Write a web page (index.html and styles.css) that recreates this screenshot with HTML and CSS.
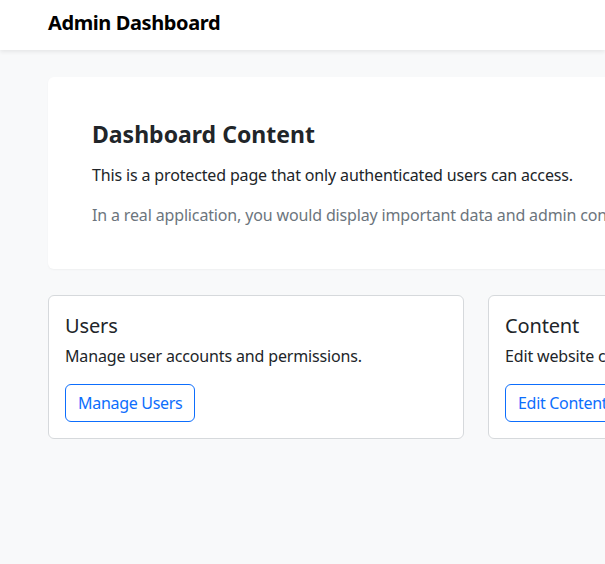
FILE: index.html
```html
<!DOCTYPE html>
<html lang="en">
<head>
<meta charset="utf-8">
<title>Admin Dashboard</title>
<link rel="stylesheet" href="styles.css">
</head>
<body>
<nav class="navbar">
  <span class="brand">Admin Dashboard</span>
</nav>
<main class="main">
  <section class="hero">
    <h2 class="hero-title">Dashboard Content</h2>
    <p class="hero-text">This is a protected page that only authenticated users can access.</p>
    <p class="hero-muted">In a real application, you would display important data and admin controls here.</p>
  </section>
  <div class="cards">
    <div class="card">
      <h5 class="card-title">Users</h5>
      <p class="card-text">Manage user accounts and permissions.</p>
      <a class="btn" href="#">Manage Users</a>
    </div>
    <div class="card">
      <h5 class="card-title">Content</h5>
      <p class="card-text">Edit website content and pages.</p>
      <a class="btn" href="#">Edit Content</a>
    </div>
    <div class="card">
      <h5 class="card-title">Settings</h5>
      <p class="card-text">Configure system settings.</p>
      <a class="btn" href="#">View Settings</a>
    </div>
  </div>
</main>
</body>
</html>
```
FILE: styles.css
```css
html, body {
  margin: 0;
  padding: 0;
  overflow: hidden;
}
body {
  background: #f8f9fa;
  color: #212529;
  font-family: "Noto Sans", "Noto Sans CJK KR", sans-serif;
  font-size: 16px;
  line-height: 1.5;
  letter-spacing: -0.15px;
  height: 564px;
}
.navbar {
  height: 50px;
  background: #fff;
  box-shadow: 0 2px 4px rgba(0, 0, 0, 0.075);
  display: flex;
  align-items: center;
  padding-left: 48px;
  position: relative;
}
.brand {
  font-size: 20px;
  font-weight: 700;
  color: #000;
  line-height: 30px;
  letter-spacing: -0.4px;
  margin-top: -5px;
}
.main {
  padding: 27px 0 0 48px;
  width: 1296px;
}
.hero {
  background: #fff;
  border-radius: 6px;
  box-shadow: 0 1px 2px rgba(0, 0, 0, 0.04);
  padding: 44px 44px 42px;
}
.hero-title {
  margin: 0 0 14px;
  font-size: 23px;
  font-weight: 700;
  line-height: 1.2;
  letter-spacing: 0;
}
.hero-text {
  margin: 0 0 16px;
}
.hero-muted {
  margin: 0;
  color: #6c757d;
}
.cards {
  display: grid;
  grid-template-columns: repeat(3, 416px);
  gap: 24px;
  margin-top: 26px;
}
.card {
  background: #fff;
  border: 1px solid #d6d9dc;
  border-radius: 6px;
  padding: 16px;
}
.card-title {
  margin: 2px 0 6px;
  font-size: 20px;
  font-weight: 400;
  line-height: 1.2;
}
.card-text {
  margin: 0 0 16px;
}
.btn {
  display: inline-block;
  padding: 6px 12px;
  border: 1px solid #0d6efd;
  border-radius: 6px;
  color: #0d6efd;
  text-decoration: none;
  line-height: 24px;
  letter-spacing: -0.3px;
}
```
